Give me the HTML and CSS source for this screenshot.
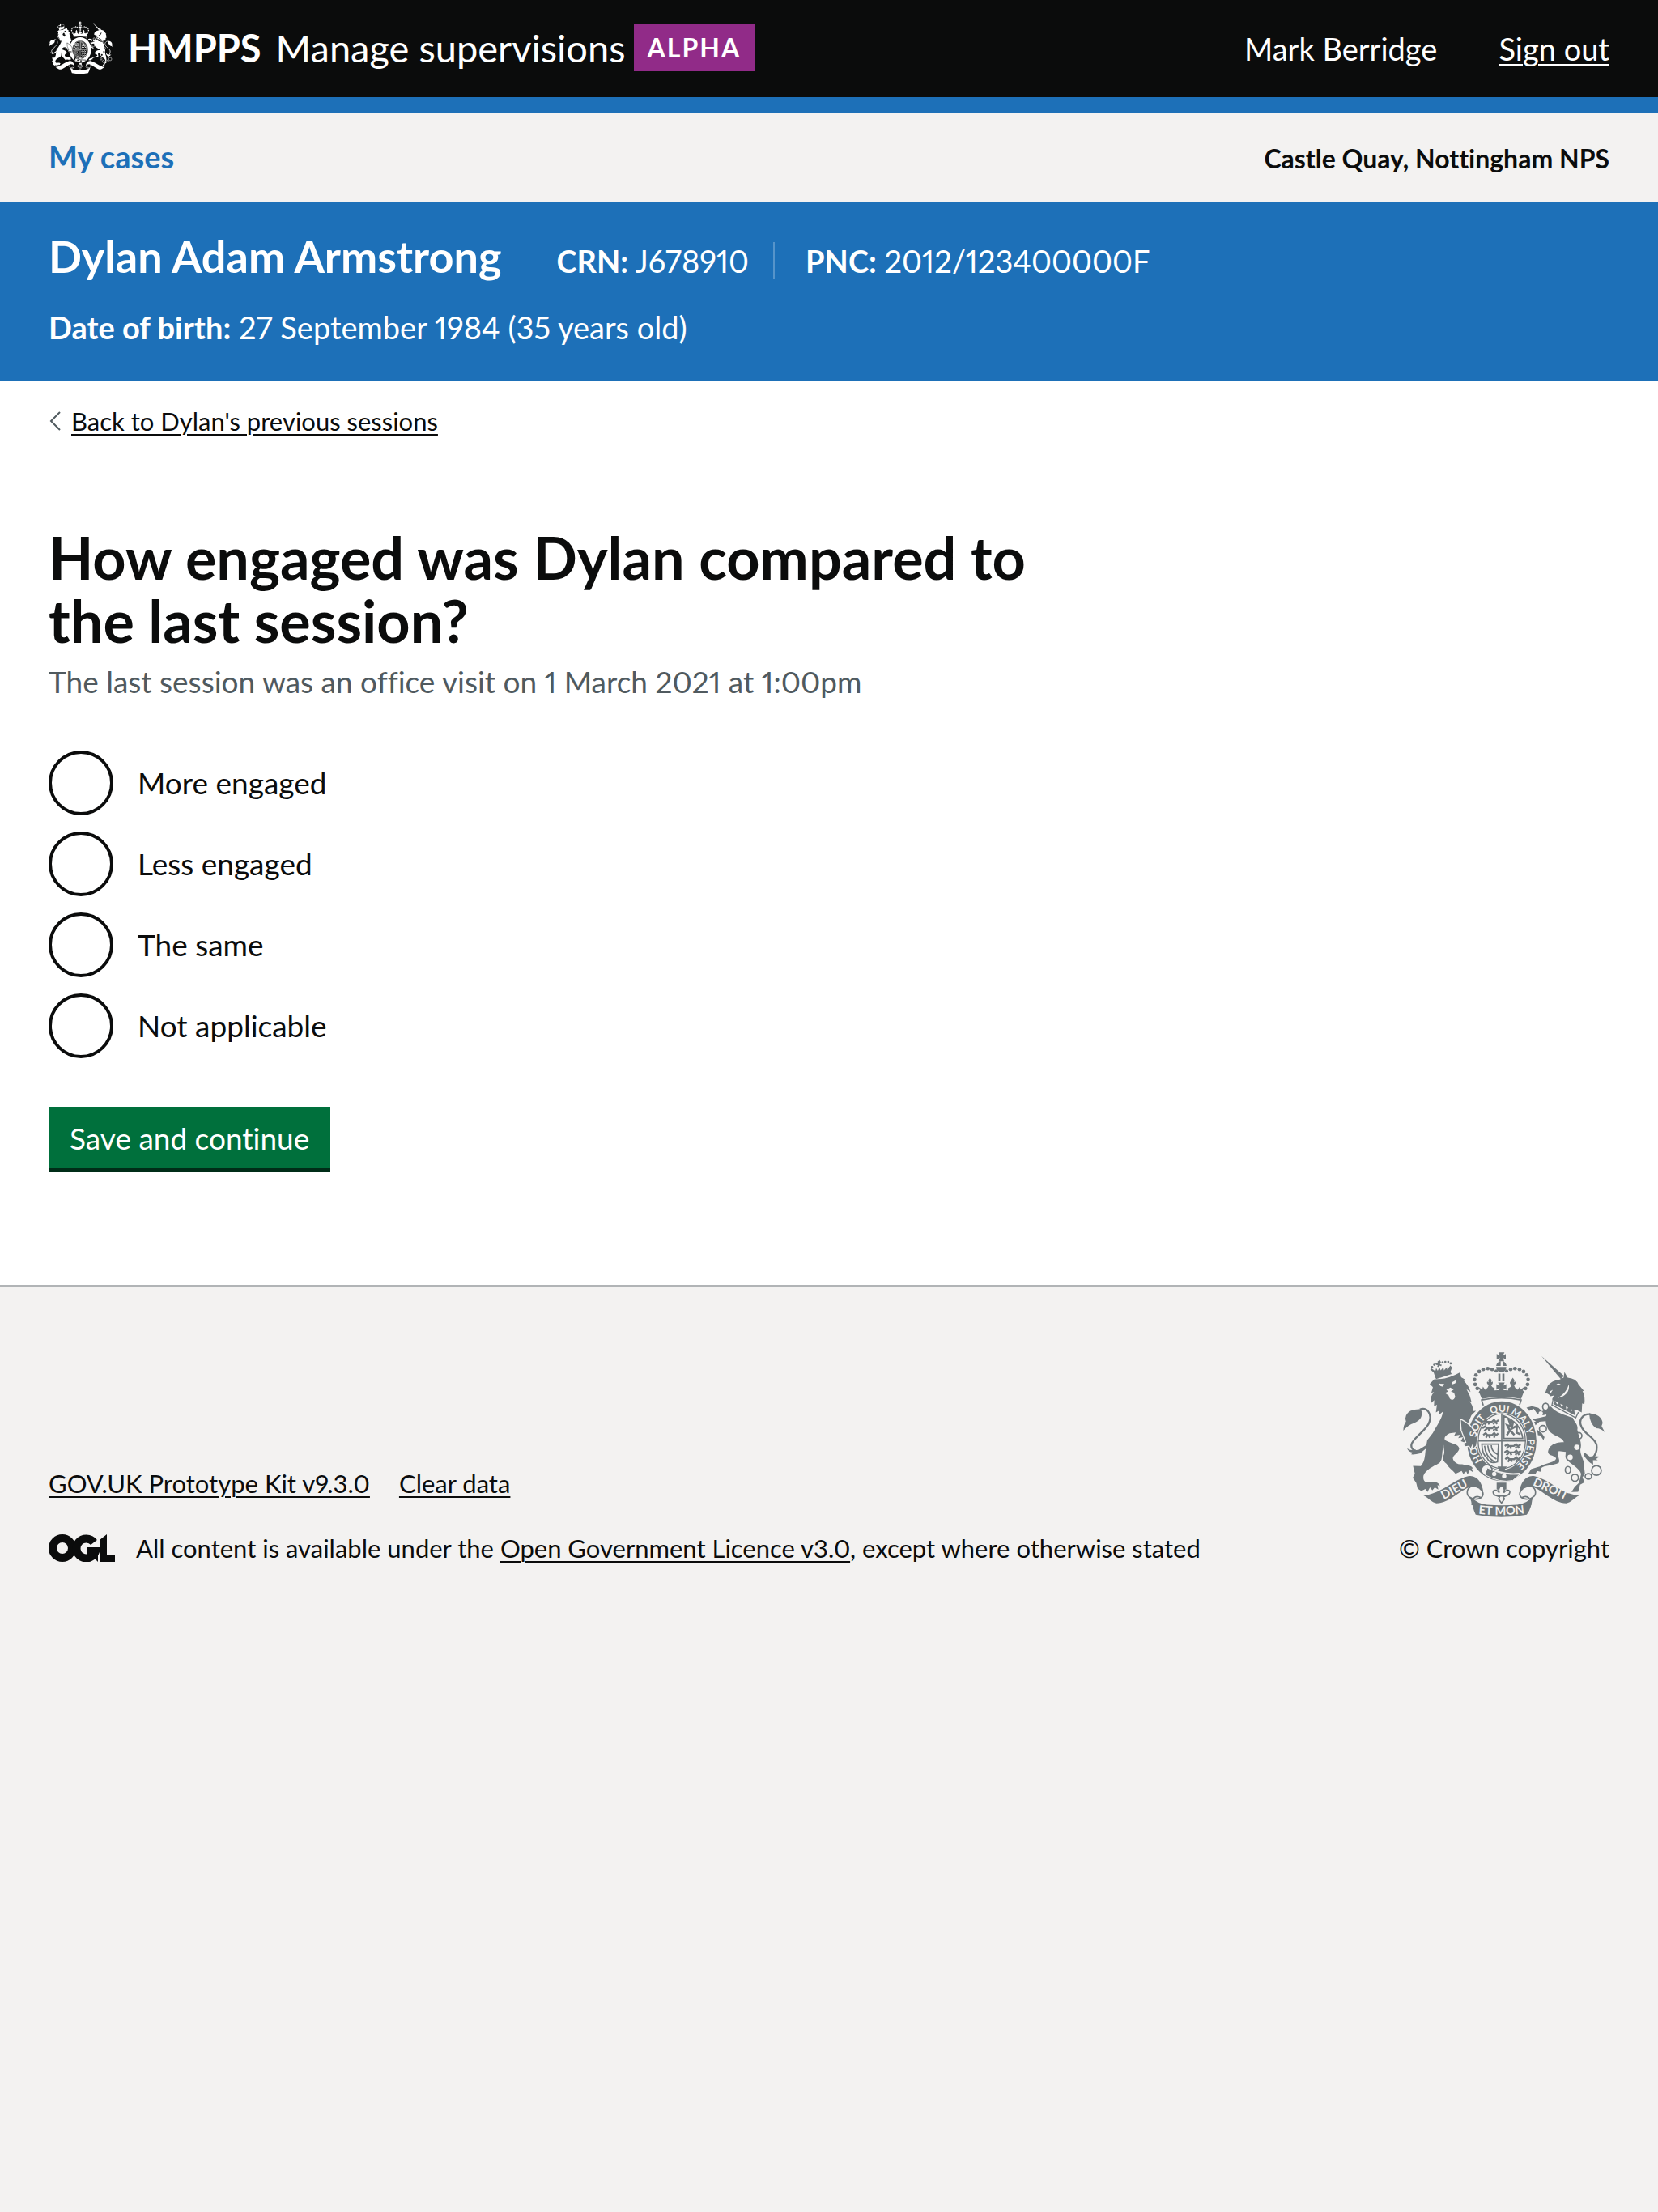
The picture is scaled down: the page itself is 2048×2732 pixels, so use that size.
FILE: index.html
```html
<!DOCTYPE html>
<html lang="en">
<head>
<meta charset="utf-8">
<meta name="viewport" content="width=device-width, initial-scale=1">
<title>How engaged was Dylan compared to the last session?</title>
<link rel="stylesheet" href="styles.css">
</head>
<body>
<svg class="defs" width="0" height="0" aria-hidden="true">
  <defs>
    <path id="garter-line" d="M463 529A96 109 0 0 1 463 311A96 109 0 0 1 463 529"/>
    <path id="dieu-line" d="M236 643Q292 614 350 580"/>
    <path id="droit-line" d="M573 582Q632 606 704 641"/>
    <path id="mon-line" d="M372 690Q461 700 552 688"/>
    <g id="beads" fill="currentColor">
      <circle cx="384" cy="237" r="6"/><circle cx="372" cy="224" r="7"/><circle cx="364" cy="209" r="7"/><circle cx="362" cy="191" r="7"/><circle cx="367" cy="174" r="7"/><circle cx="379" cy="161" r="7"/><circle cx="394" cy="153" r="7"/><circle cx="411" cy="150" r="7"/><circle cx="427" cy="153" r="7"/><circle cx="442" cy="159" r="6"/>
      <path d="M386 242l-10-24 14 10 3-11 8 12q12-8 14-18-10-5-6-13l5 3-1-8 6-9 6 9-1 8 5-3q3 9-6 14 3 9 14 12l-4 24z"/>
    </g>
    <g id="scroll">
      <path fill="currentColor" d="M172 622C237 617 281 563 338 550C371 544 390 575 394 607C383 598 365 587 347 590C310 599 270 650 220 651C202 648 192 632 172 622Z"/>
      <path fill="none" stroke="currentColor" stroke-width="5" d="M346 591C331 599 331 620 344 628C352 635 372 640 386 630C399 620 393 603 381 596M344 628C350 636 354 650 352 658M386 630C376 624 366 624 358 632"/>
    </g>
    <g id="lion-rows" fill="none" stroke="currentColor" stroke-width="7">
      <path d="M0 8l10-6 6 6h18l8-7 7 8 10-7M6 18l8-7M24 18l-3-9M40 18l3-8M54 16l-6-6M-1 32l10-7 8 7h18l8-7 7 8 10-7M6 42l9-8M25 42l-4-9M41 42l2-8M54 41l-6-7M2 57l9-7 6 7h18l8-7 7 8 8-7M12 67l5-8M27 67l-4-8M43 67l1-9"/>
    </g>
  </defs>
  <symbol id="crest" viewBox="92 86 760 620">
    <g fill="currentColor">
      <!-- lion -->
      <path d="M216 183L210 165L197 153L202 149L216 160L219 148L225 158L231 145L236 157L246 145L248 157L259 145L260 154L272 139L278 146L272 163L277 170L219 189Z"/>
      <path d="M224 124l8-6 5 8-4 8 7 2-2 5-7-2-2 6-6-2 2-6-7-1 1-5 7 0z"/>
      <circle cx="204" cy="144" r="4"/><circle cx="212" cy="136" r="4"/><circle cx="221" cy="132" r="4"/><circle cx="243" cy="127" r="4"/><circle cx="253" cy="125" r="4"/><circle cx="264" cy="125" r="4"/><circle cx="273" cy="131" r="4"/>
      <path d="M195 207L212 190Q260 191 308 164L312 182L330 193L322 196Q340 213 347 237L332 227Q346 250 351 276L342 271Q356 285 357 308L367 307L350 324L338 352C356 373 367 391 370 410L368 438L357 450L355 435L347 451L342 438L327 440L321 430L330 427L311 420L319 405L301 409L309 396L286 400L292 388L269 391C250 400 246 412 255 418C282 431 303 432 305 448C301 465 284 469 281 483C284 498 298 507 316 506C331 511 354 508 356 524L351 520L356 535L344 528L336 544L331 532L320 542L314 531L291 541C281 527 266 520 258 504C244 493 242 487 246 474C255 456 242 442 249 427C236 465 248 490 228 503C208 514 181 526 172 548C170 563 174 574 192 573C213 570 230 572 233 587L224 583L227 600L214 592L205 603L196 592L187 609L179 598L164 605L150 596L145 575L132 556L140 541L133 512L162 513C180 491 177 469 181 444L186 416L207 389C223 359 242 334 244 310L230 322L231 306L218 313L222 285L211 291L212 267L199 279Q195 256 211 237L201 240L207 219Z"/>
      <path d="M163 302Q174 338 138 352Q113 360 97 381Q97 360 107 347Q98 323 123 307Q145 300 163 302Z"/>
      <path d="M111 447Q127 458 155 452L190 430L184 445L160 465Q138 471 126 469L132 462Q117 460 111 447Z"/>
      <!-- unicorn -->
      <path d="M611 104L694 177L683 190Z"/>
      <path d="M625 239L634 214Q650 193 677 191L693 184L696 163L708 184Q740 187 748 209L770 235L763 233Q774 255 770 283L762 279L760 313L748 307Q738 301 729 306L671 276L650 264L657 250L645 253L638 246Z"/>
      <path d="M645 291C665 315 693 322 727 333C733 351 748 357 744 378C750 408 763 427 755 452C755 476 772 493 769 514L772 541L763 555L771 573L754 582L747 608L722 609L734 590L750 575L758 542C752 520 721 507 703 488C697 479 701 468 701 460L675 457C666 476 683 489 674 501C652 511 624 508 609 520L607 534L594 531L588 543L561 542L572 524L604 514C628 502 662 499 665 485C662 472 638 477 635 461C637 443 650 424 694 424C688 404 661 403 643 386C625 366 623 342 629 321Z"/>
      <path d="M641 313Q618 332 594 317L582 300L565 307L555 295L575 290L599 296L613 309L642 291Z"/>
      <path d="M634 345L603 348L586 363L594 377L612 391L622 405L618 416L607 399L591 397L569 365L568 352L591 346L573 339L604 333L637 325Z"/>
      <path d="M788 316Q833 319 838 352L834 364L846 387Q831 372 814 372Q790 356 788 316Z"/>
      <path d="M767 459L790 477Q807 474 832 478Q818 480 814 487L820 491L802 491L803 507Q785 500 767 471Z"/>
    </g>
    <g fill="none" stroke="currentColor" stroke-width="7">
      <path d="M158 302C186 292 204 320 194 348C184 381 130 408 127 434Q125 451 143 455"/>
      <path d="M792 320C761 318 747 344 760 368C773 396 805 403 815 432Q820 461 802 481"/>
      <g stroke-width="5">
        <ellipse cx="626" cy="292" rx="11" ry="13" fill="var(--crest-ground)"/>
        <ellipse cx="616" cy="374" rx="13" ry="12" fill="var(--crest-ground)"/>
        <circle cx="749" cy="400" r="12"/><ellipse cx="709" cy="527" rx="10" ry="13"/><circle cx="735" cy="556" r="13"/><ellipse cx="785" cy="551" rx="12" ry="10"/><circle cx="815" cy="529" r="18"/>
      </g>
    </g>
    <g fill="var(--crest-ground)">
      <path d="M228 206L249 207L244 217Q233 218 228 206ZM276 202L296 191L290 205L280 209ZM257 229L272 221L284 228L274 235L286 240L290 255Q286 266 277 266Q268 264 266 251L252 241L264 235Z"/>
      <path d="M664 211Q674 200 684 211ZM641 235L653 229L645 242ZM712 209C718 235 697 257 672 259Q704 241 712 209Z"/>
      <circle cx="742" cy="443" r="10"/><circle cx="717" cy="480" r="10"/><circle cx="608" cy="317" r="8"/>
      <path d="M646 267L748 314L740 335L647 287Z"/>
    </g>
    <path fill="none" stroke="currentColor" stroke-width="4" d="M654 263L649 288M650 286L738 333L748 312"/>
    <path fill="currentColor" d="M654 282L660 269L669 283L677 272L685 292L699 279L703 302L718 289L720 310L732 299L735 324Z"/>
    <!-- crown -->
    <use href="#beads"/><use href="#beads" transform="matrix(-1 0 0 1 923 0)"/>
    <path fill="currentColor" d="M451 90h22l-6 12 11-6v20l-11-6 5 13h-22l6-13-12 6V96l12 6zM442 140q3-15 17-17v17zm24 0v-17q12 2 15 17zM442 144h38q0 18-19 20-18-2-19-20zM450 169h8v28h-8zm15 0h8v28h-8zM449 202h25l-6 12 12-6v21l-12-6 6 18h-25l6-18-12 6v-21l12 6zM379 239Q461 221 544 239L535 263Q461 248 389 263Z"/>
    <path fill="var(--crest-ground)" stroke="currentColor" stroke-width="5" d="M388 267Q461 252 535 267L528 289H395Z"/>
    <!-- garter and shield -->
    <ellipse cx="463" cy="420" rx="136" ry="154" fill="var(--crest-ground)"/>
    <path fill="var(--crest-ground)" d="M308 342Q352 366 374 407L354 452L333 420Z"/>
    <ellipse cx="463" cy="420" rx="129" ry="148" fill="currentColor"/>
    <ellipse cx="463" cy="420" rx="93" ry="107" fill="var(--crest-ground)"/>
    <ellipse cx="463" cy="420" rx="88" ry="102" fill="none" stroke="currentColor" stroke-width="4"/>
    <path fill="none" stroke="currentColor" stroke-width="5" d="M463 317V520M374 419H552M471 326V410H541Q534 352 471 326ZM389 431L451 431L447 497Q420 507 408 482Q390 469 389 431ZM399 437Q401 476 437 498M411 436Q413 471 443 486M424 435Q424 457 447 469"/>
    <use href="#lion-rows" x="392" y="340"/><use href="#lion-rows" x="474" y="430"/>
    <path fill="none" stroke="currentColor" stroke-width="8" d="M482 398L493 380L483 361L498 366L490 343L505 349L499 374L519 363L518 388L533 395M495 381L510 397"/>
    <path fill="currentColor" d="M447 514H482L473 527H453Z"/>
    <!-- left foreleg laid over the garter -->
    <path fill="currentColor" stroke="var(--crest-ground)" stroke-width="4" d="M309 338C344 354 369 383 373 412L369 437L357 450L354 436L347 451L341 439L327 441L318 429L329 424L312 380Z"/>
    <!-- buckle -->
    <path fill="none" stroke="var(--crest-ground)" stroke-width="5" d="M400 509Q460 548 529 540"/>
    <circle cx="407" cy="527" r="20" fill="var(--crest-ground)" stroke="currentColor" stroke-width="5"/>
    <path fill="currentColor" stroke="var(--crest-ground)" stroke-width="3" d="M409 519Q460 548 530 543L504 566Q458 577 400 545Z"/>
    <circle cx="435" cy="542" r="8" fill="var(--crest-ground)"/><circle cx="472" cy="550" r="8" fill="var(--crest-ground)"/>
    <!-- scroll -->
    <path fill="currentColor" d="M444 574H480V600H444Z"/>
    <path fill="var(--crest-ground)" stroke="currentColor" stroke-width="5" d="M462 584Q478 598 470 612Q481 597 493 606Q494 619 479 623L469 627L473 635L462 650L451 635L455 627L445 623Q429 620 431 606Q443 597 454 612Q446 598 462 584ZM446 624H478"/>
    <use href="#scroll"/><use href="#scroll" transform="matrix(-1 0 0 1 923 0)"/>
    <path fill="currentColor" d="M350 628Q373 654 408 656Q461 661 521 656Q560 650 577 626Q575 669 556 693Q461 712 366 693Q353 668 350 628Z"/>
  </symbol>
</svg>

<header class="header">
  <div class="container header-row">
    <div class="brand">
      <a class="brand-link" href="#">
        <svg class="header-crest" aria-hidden="true"><use href="#crest"/></svg>
        <span class="brand-org">HMPPS</span>
        <span class="brand-service">Manage supervisions</span>
      </a>
      <strong class="tag">ALPHA</strong>
    </div>
    <nav class="account" aria-label="Account">
      <span>Mark Berridge</span>
      <a href="#">Sign out</a>
    </nav>
  </div>
</header>

<div class="primary-nav">
  <div class="container primary-row">
    <nav aria-label="Primary"><a class="primary-link" href="#">My cases</a></nav>
    <p class="team">Castle Quay, Nottingham NPS</p>
  </div>
</div>

<section class="person" aria-label="Service user">
  <div class="container">
    <div class="person-row">
      <p class="person-name">Dylan Adam Armstrong</p>
      <p class="person-id"><b>CRN:</b> J678910</p>
      <p class="person-id person-id-next"><b>PNC:</b> 2012/123400000F</p>
    </div>
    <p class="person-birth"><b>Date of birth:</b> 27 September 1984 (35 years old)</p>
  </div>
</section>

<main class="main">
  <div class="container">
    <div class="back">
      <svg class="back-icon" viewBox="0 0 16 24" aria-hidden="true"><path d="M14 1L3 12L14 23"/></svg>
      <a href="#">Back to Dylan's previous sessions</a>
    </div>
    <form class="question">
      <fieldset class="fieldset" aria-describedby="hint">
        <legend class="legend"><h1 class="title">How engaged was Dylan compared to the last session?</h1></legend>
        <p class="hint" id="hint">The last session was an office visit on 1 March 2021 at 1:00pm</p>
        <div class="radios">
          <div class="radio"><input type="radio" name="engaged" id="more" value="more"><label for="more">More engaged</label></div>
          <div class="radio"><input type="radio" name="engaged" id="less" value="less"><label for="less">Less engaged</label></div>
          <div class="radio"><input type="radio" name="engaged" id="same" value="same"><label for="same">The same</label></div>
          <div class="radio"><input type="radio" name="engaged" id="na" value="na"><label for="na">Not applicable</label></div>
        </div>
      </fieldset>
      <button class="button" type="submit">Save and continue</button>
    </form>
  </div>
</main>

<footer class="footer">
  <div class="container footer-row">
    <div class="footer-meta">
      <ul class="footer-links">
        <li><a href="#">GOV.UK Prototype Kit v9.3.0</a></li>
        <li><a href="#">Clear data</a></li>
      </ul>
      <div class="licence">
        <svg class="ogl" viewBox="0 0 82 34" role="img" aria-label="OGL">
          <circle cx="17" cy="17" r="12"/>
          <path d="M56 10A12 12 0 1 0 58 21H47"/>
          <path class="ogl-solid" d="M48 18H61V34L57 30ZM63 7L72 0V25H82V34H63Z"/>
        </svg>
        <p>All content is available under the <a href="#">Open Government Licence v3.0</a>, except where otherwise stated</p>
      </div>
    </div>
    <a class="copyright" href="#">
      <svg class="footer-crest" viewBox="92 86 760 620" aria-hidden="true">
        <use href="#crest" x="92" y="86" width="760" height="620"/>
        <g class="motto">
          <text><textPath href="#garter-line" startOffset="112">HO</textPath></text>
          <text><textPath href="#garter-line" startOffset="216">SOIT</textPath></text>
          <text><textPath href="#garter-line" startOffset="314">QUI</textPath></text>
          <text><textPath href="#garter-line" startOffset="394">MAL</textPath></text>
          <text><textPath href="#garter-line" startOffset="448">Y</textPath></text>
          <text><textPath href="#garter-line" startOffset="530">PENSE</textPath></text>
        </g>
        <g class="motto motto-scroll">
          <text><textPath href="#dieu-line" startOffset="50%">DIEU</textPath></text>
          <text><textPath href="#mon-line" startOffset="50%">ET MON</textPath></text>
          <text><textPath href="#droit-line" startOffset="50%">DROIT</textPath></text>
        </g>
      </svg>
      <span>© Crown copyright</span>
    </a>
  </div>
</footer>
</body>
</html>
```

FILE: styles.css
```css
:root {
  --black: #0b0c0c;
  --blue: #1d70b8;
  --grey: #f3f2f1;
  --crest-ground: #f3f2f1;
}

* { box-sizing: border-box; }

html { background: var(--grey); }

body {
  margin: 0;
  color: var(--black);
  font-family: Lato, "Liberation Sans", sans-serif;
  font-size: 37px;
  font-variant-ligatures: none;
  font-variant-numeric: proportional-nums;
  line-height: 50px;
}

p, h1, ul, fieldset { margin: 0; padding: 0; }

a {
  color: inherit;
  text-decoration-thickness: 2px;
  text-underline-offset: 4px;
}

.defs { position: absolute; }

.container { padding: 0 60px; }

.header {
  background: var(--black);
  border-bottom: 20px solid var(--blue);
  color: #fff;
  --crest-ground: #0b0c0c;
}

.header-row {
  display: flex;
  align-items: center;
  justify-content: space-between;
  min-height: 120px;
}

.brand, .brand-link { display: flex; align-items: center; }
.brand { gap: 10px; padding-bottom: 2px; }
.brand-link { font-size: 47px; text-decoration: none; }
.header-crest { width: 80px; height: 68px; margin-right: 18px; }
.brand-org { font-weight: 700; margin-right: 18px; }

.tag {
  padding: 4px 17px;
  background: #912b88;
  font-size: 32px;
  letter-spacing: 2px;
}

.account { display: flex; gap: 76px; font-size: 38px; }

.primary-nav { background: var(--grey); }

.primary-row {
  display: flex;
  align-items: baseline;
  justify-content: space-between;
  padding-top: 28px;
  padding-bottom: 28px;
}

.primary-link { color: var(--blue); font-size: 38px; font-weight: 700; text-decoration: none; }
.team { font-size: 32px; font-weight: 700; }

.person {
  padding: 38px 0 42px;
  background: var(--blue);
  color: #fff;
  font-size: 38px;
}

.person-row { display: flex; align-items: baseline; }
.person-name { margin-right: 68px; font-size: 54px; font-weight: 700; line-height: 60px; }
.person-id { line-height: 46px; }
.person-id-next { margin-left: 30px; padding-left: 38px; border-left: 2px solid #5694ca; }
.person-birth { margin-top: 32px; }

.main { padding: 24px 0 140px; background: #fff; }

.back { display: flex; align-items: center; gap: 12px; font-size: 31px; }
.back-icon { width: 16px; height: 24px; fill: none; stroke: #505a5f; stroke-width: 2; }

.question { margin-top: 104px; }
.fieldset { border: 0; }
.legend { max-width: 67%; padding: 0; }
.title { font-size: 72px; line-height: 78px; }
.hint { margin-top: 12px; color: #505a5f; }

.radios { display: grid; gap: 20px; margin-top: 60px; }
.radio { display: flex; align-items: center; gap: 30px; }

.radio input {
  appearance: none;
  width: 80px;
  height: 80px;
  margin: 0;
  border: 4px solid var(--black);
  border-radius: 50%;
  background: #fff;
}

.radio input:checked {
  background: var(--black);
  box-shadow: inset 0 0 0 16px #fff;
}

.button {
  margin: 60px 0 0;
  padding: 14px 26px 12px;
  border: 0;
  border-bottom: 4px solid #002d18;
  background: #00703c;
  color: #fff;
  font: inherit;
}

.footer {
  padding: 80px 0;
  border-top: 2px solid #b1b4b6;
  background: var(--grey);
  font-size: 31px;
}

.footer-row { display: flex; align-items: flex-end; justify-content: space-between; }
.footer-links { display: flex; gap: 36px; margin-bottom: 30px; list-style: none; }
.licence { display: flex; align-items: center; gap: 26px; }
.ogl { width: 82px; height: 34px; fill: none; stroke: var(--black); stroke-width: 10; }
.ogl-solid { fill: var(--black); stroke: none; }

.copyright {
  display: flex;
  flex-direction: column;
  align-items: center;
  gap: 12px;
  text-decoration: none;
}

.footer-crest { width: 254px; height: 206px; color: #6f777b; }
.motto { fill: var(--grey); font-size: 36px; font-weight: 700; text-anchor: middle; }
.motto-scroll { font-size: 44px; }
```
